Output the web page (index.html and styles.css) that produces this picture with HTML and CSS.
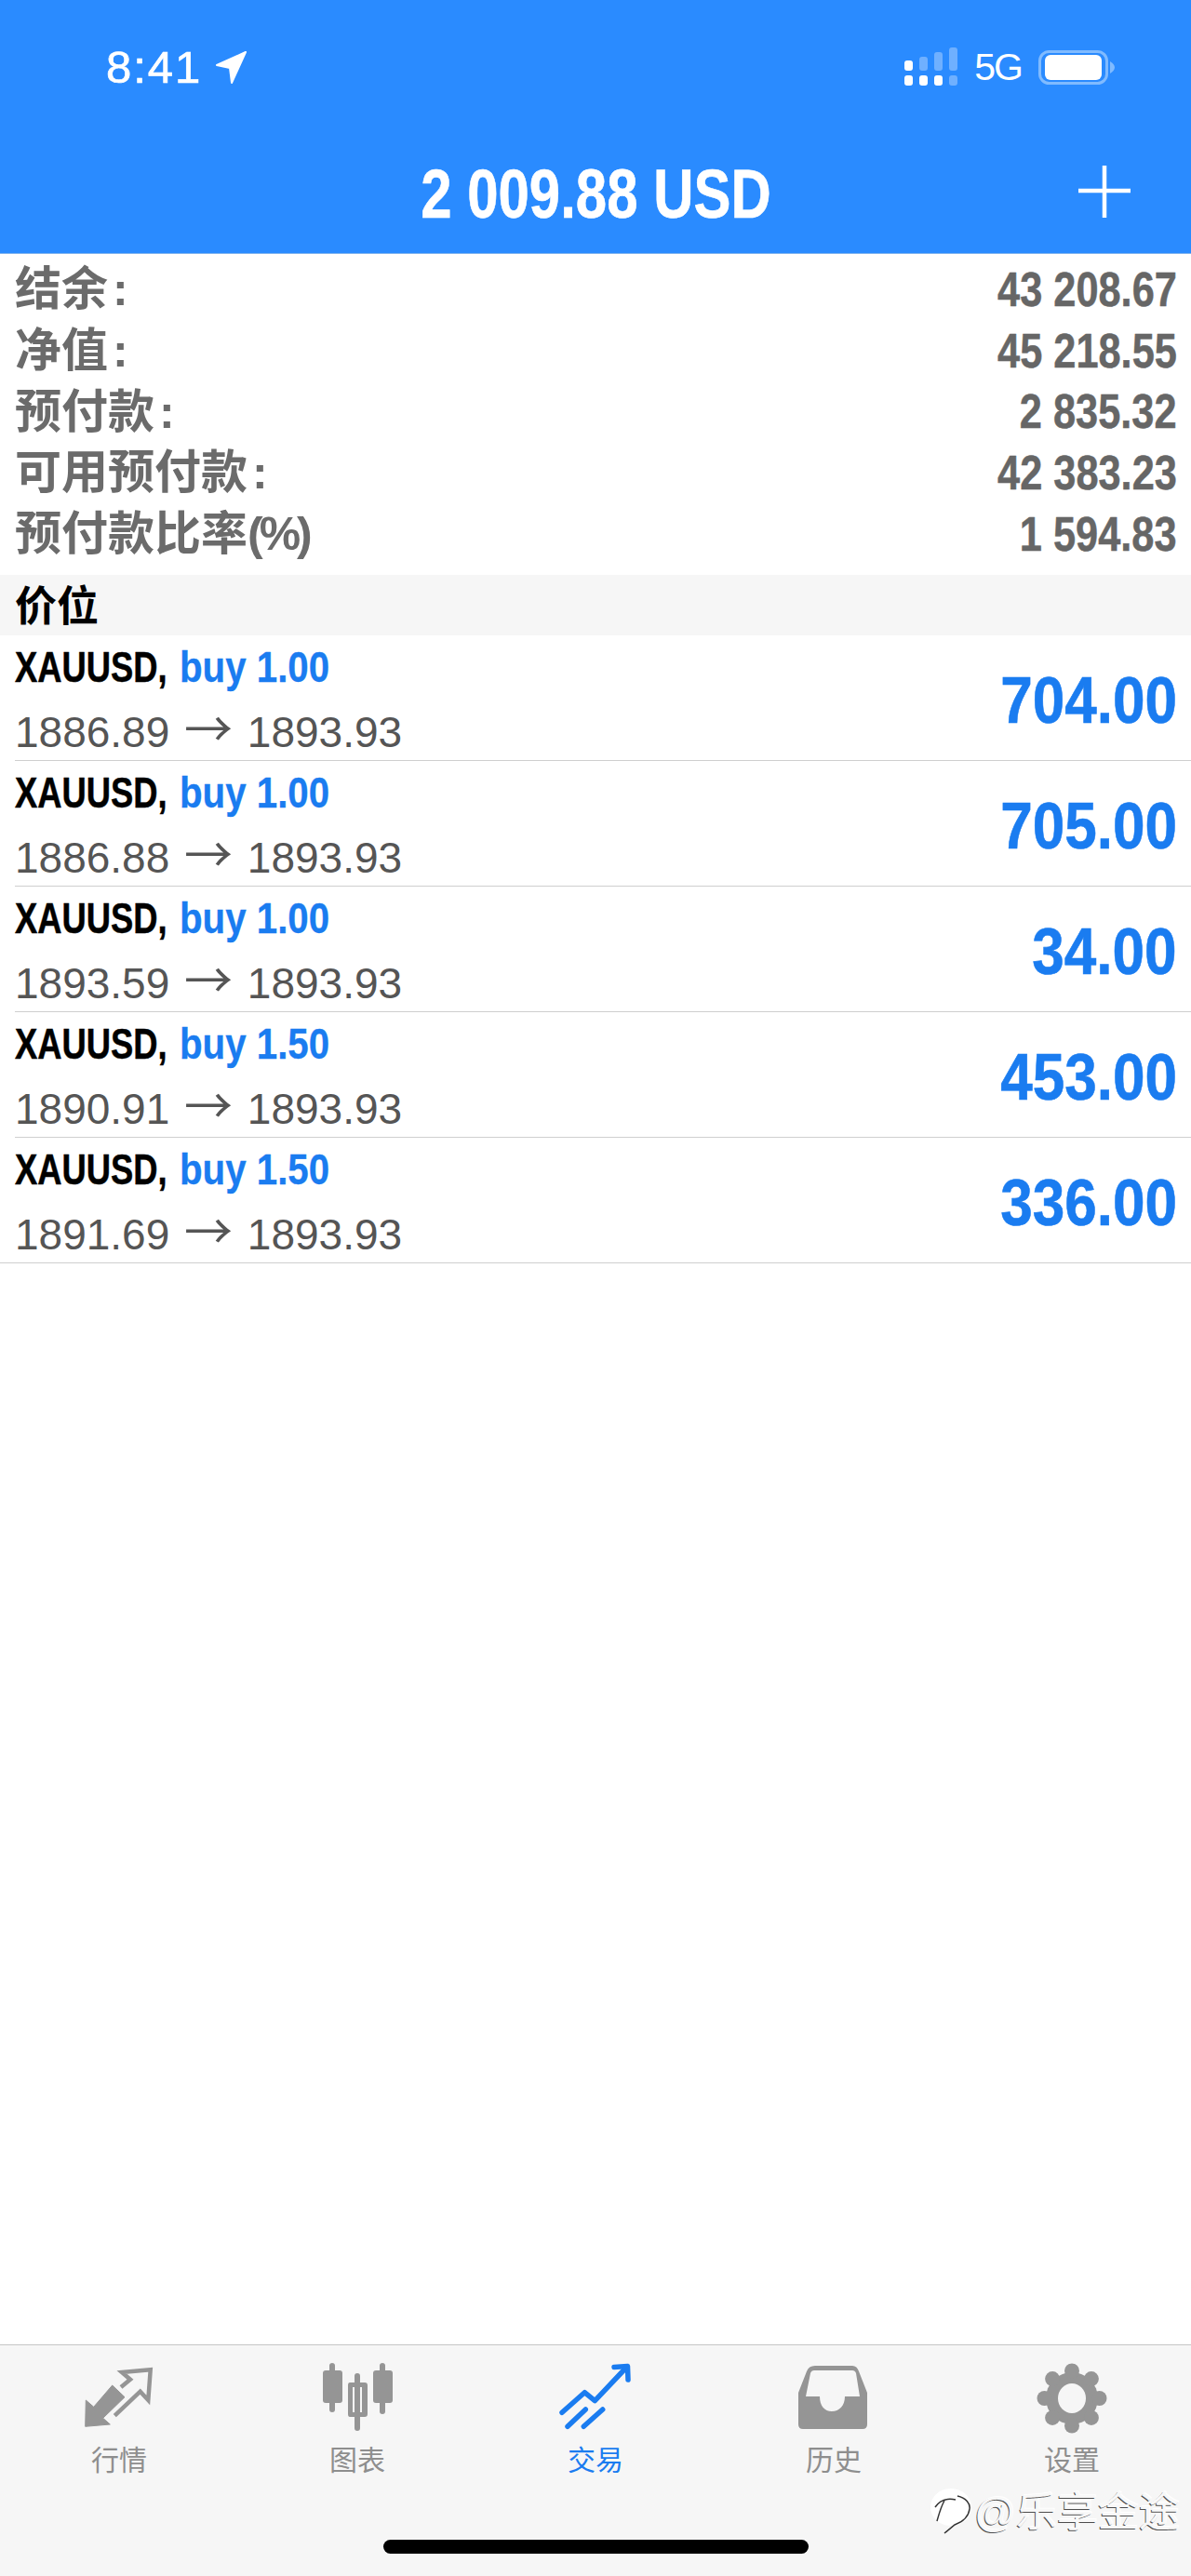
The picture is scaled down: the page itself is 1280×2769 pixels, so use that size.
FILE: index.html
```html
<!DOCTYPE html>
<html lang="zh-CN">
<head>
    <meta charset="UTF-8">
    <meta name="viewport" content="width=device-width, initial-scale=1.0">
    <title>交易</title>
    <link rel="stylesheet" href="styles.css">
</head>
<body>
    <div class="page">
        <div class="header">
            <div class="status">
                <div class="status-left">
                    <span class="time">8:41</span>
                    <svg class="location" width="34" height="35" viewBox="0 0 34 35"><path d="M32 1 L1 15 L15 18 L17 34 Z" fill="#fff" stroke="#fff" stroke-width="2" stroke-linejoin="round"/></svg>
                </div>
                <div class="status-right">
                    <svg width="62" height="45" viewBox="0 0 62 45">
                        <rect x="2" y="15" width="9" height="11" rx="3" fill="#fff"/>
                        <rect x="2" y="31" width="9" height="11" rx="3" fill="#fff"/>
                        <rect x="18" y="31" width="9" height="11" rx="3" fill="#fff"/>
                        <rect x="34" y="31" width="9" height="11" rx="3" fill="#fff"/>
                        <rect x="18" y="11" width="9" height="15" rx="3" fill="#6fb0ff"/>
                        <rect x="34" y="6" width="9" height="20" rx="3" fill="#6fb0ff"/>
                        <rect x="50" y="1" width="9" height="25" rx="3" fill="#6fb0ff"/>
                        <rect x="50" y="31" width="9" height="11" rx="3" fill="#6fb0ff"/>
                    </svg>
                    <span class="network">5G</span>
                    <svg width="82" height="37" viewBox="0 0 82 37">
                        <rect x="1.5" y="1.5" width="72" height="34" rx="10" fill="none" stroke="#80bbff" stroke-width="3"/>
                        <rect x="7" y="5" width="61" height="27" rx="6" fill="#fff"/>
                        <path d="M77 12 C80 14 82 16 82 18.500 C82 21 80 23 77 25 Z" fill="#80bbff"/>
                    </svg>
                </div>
            </div>
            <div class="title-bar">
                <span class="title"><span class="squeeze">2 009.88 USD</span></span>
                <svg class="plus" width="56" height="56" viewBox="0 0 56 56"><path d="M28 0 V56 M0 27 H56" stroke="#fff" stroke-width="4.500" fill="none"/></svg>
            </div>
        </div>

        <div class="content">
            <div class="summary">
                <div class="summary-row"><span class="summary-label">结余<i>:</i></span><span class="summary-value">43 208.67</span></div>
                <div class="summary-row"><span class="summary-label">净值<i>:</i></span><span class="summary-value">45 218.55</span></div>
                <div class="summary-row"><span class="summary-label">预付款<i>:</i></span><span class="summary-value">2 835.32</span></div>
                <div class="summary-row"><span class="summary-label">可用预付款<i>:</i></span><span class="summary-value">42 383.23</span></div>
                <div class="summary-row"><span class="summary-label">预付款比率<em>(%)</em></span><span class="summary-value">1 594.83</span></div>
            </div>

            <div class="section-title">价位</div>

            <div class="trade">
                <div class="trade-info">
                    <div class="trade-name"><b>XAUUSD,</b> <span>buy 1.00</span></div>
                    <div class="trade-price">1886.89 <span class="arrow">→</span> 1893.93</div>
                </div>
                <div class="trade-profit">704.00</div>
            </div>
            <div class="trade">
                <div class="trade-info">
                    <div class="trade-name"><b>XAUUSD,</b> <span>buy 1.00</span></div>
                    <div class="trade-price">1886.88 <span class="arrow">→</span> 1893.93</div>
                </div>
                <div class="trade-profit">705.00</div>
            </div>
            <div class="trade">
                <div class="trade-info">
                    <div class="trade-name"><b>XAUUSD,</b> <span>buy 1.00</span></div>
                    <div class="trade-price">1893.59 <span class="arrow">→</span> 1893.93</div>
                </div>
                <div class="trade-profit">34.00</div>
            </div>
            <div class="trade">
                <div class="trade-info">
                    <div class="trade-name"><b>XAUUSD,</b> <span>buy 1.50</span></div>
                    <div class="trade-price">1890.91 <span class="arrow">→</span> 1893.93</div>
                </div>
                <div class="trade-profit">453.00</div>
            </div>
            <div class="trade trade-last">
                <div class="trade-info">
                    <div class="trade-name"><b>XAUUSD,</b> <span>buy 1.50</span></div>
                    <div class="trade-price">1891.69 <span class="arrow">→</span> 1893.93</div>
                </div>
                <div class="trade-profit">336.00</div>
            </div>
        </div>

        <div class="tabbar">
            <div class="tabs">
                <div class="tab">
                    <svg width="80" height="80" viewBox="0 0 80 80">
                        <path d="M4.300 40 L12.700 47.300 L32.700 24 L46 36.700 L22.700 59.300 L30.300 66 L3.700 68.300 Z" fill="#959595" stroke="#959595" stroke-linejoin="round"/>
                        <path d="M42 26 L52 17.700 L43 10 L73.700 7.300 L71.300 40 L62.700 30.700 L35.300 56.700" fill="none" stroke="#959595" stroke-width="4.500"/>
                    </svg>
                    <span>行情</span>
                </div>
                <div class="tab">
                    <svg width="80" height="80" viewBox="0 0 80 80">
                        <rect x="10" y="0" width="6" height="53" rx="3" fill="#959595"/>
                        <rect x="3" y="8" width="21" height="35" rx="3" fill="#959595"/>
                        <rect x="37" y="11" width="6" height="62" rx="3" fill="#959595"/>
                        <path d="M32 21 H48 Q51 21 51 24 V55 Q51 58 48 58 H32 Q30 58 30 55 V24 Q30 21 32 21 Z M35 26 V53 H45 V26 Z" fill="#959595" fill-rule="evenodd"/>
                        <rect x="64" y="0" width="6" height="55" rx="3" fill="#959595"/>
                        <rect x="57" y="8" width="21" height="35" rx="3" fill="#959595"/>
                    </svg>
                    <span>图表</span>
                </div>
                <div class="tab tab-active">
                    <svg width="80" height="80" viewBox="0 0 80 80">
                        <g fill="none" stroke="#1a7cf0" stroke-width="5.500" stroke-linecap="round" stroke-linejoin="round">
                            <path d="M4 53.300 L28.300 31.700 L39.300 40.700 L73 5"/>
                            <path d="M60 4.500 L74.500 3.500 L75 18"/>
                            <path d="M10 68.300 L29.300 50"/>
                            <path d="M27.300 68.300 L47.700 50"/>
                        </g>
                    </svg>
                    <span>交易</span>
                </div>
                <div class="tab">
                    <svg width="80" height="80" viewBox="0 0 80 80">
                        <path d="M20 3 H60 Q65 3 67 9 L76 32 V66 Q76 71 71 71 H7 Q2 71 2 66 V32 L11 9 Q13 3 20 3 Z M19 8 Q16 8 15 11 L10 36 H25 C25 46 30 52 38 52 C46 52 52 46 52 36 H68 L64 11 Q63 8 60 8 Z" fill="#959595" fill-rule="evenodd"/>
                    </svg>
                    <span>历史</span>
                </div>
                <div class="tab">
                    <svg width="80" height="80" viewBox="0 0 80 80">
                        <g fill="#959595">
                            <circle cx="40" cy="38" r="28"/>
                            <circle cx="40" cy="8.500" r="8"/>
                            <circle cx="40" cy="67.500" r="8"/>
                            <circle cx="10.500" cy="38" r="8"/>
                            <circle cx="69.500" cy="38" r="8"/>
                            <circle cx="19.100" cy="17.100" r="8"/>
                            <circle cx="60.900" cy="17.100" r="8"/>
                            <circle cx="19.100" cy="58.900" r="8"/>
                            <circle cx="60.900" cy="58.900" r="8"/>
                        </g>
                        <ellipse cx="40" cy="38" rx="15" ry="16" fill="#f6f6f6"/>
                    </svg>
                    <span>设置</span>
                </div>
            </div>
            <div class="home-bar"></div>

            <!-- watermark sits over the tab bar -->
            <div class="watermark">
                <svg width="46" height="56" viewBox="0 0 46 56">
                    <ellipse cx="22" cy="22" rx="22" ry="20" fill="#fff"/>
                    <path d="M5 22 C10 15 18 12 27 14 M15 15 C11 22 9 30 7 37 M29 10 C38 12 43 18 42 24 C41 32 34 38 26 41 L15 50" fill="none" stroke="#333" stroke-width="1.500"/>
                </svg>
                <span>@乐享金途</span>
            </div>
        </div>
    </div>
</body>
</html>
```

FILE: styles.css
```css
* {
    box-sizing: border-box;
}
body {
    margin: 0;
    font-family: "Liberation Sans", "Noto Sans CJK SC", sans-serif;
    background-color: #fff;
}
.page {
    display: flex;
    flex-direction: column;
    height: 2769px;
}

/* blue top area */
.header {
    height: 273px;
    background-color: #2a8bff;
    border-bottom: 1px solid #7fb3ee;
    color: #fff;
}
.status {
    display: flex;
    justify-content: space-between;
    align-items: center;
    height: 144px;
    padding: 0 0 0 114px;
}
.status-left {
    display: flex;
    align-items: center;
    gap: 15px;
}
.time {
    font-size: 49px;
    letter-spacing: 2px;
    -webkit-text-stroke: 0.7px #fff;
}
.status-right {
    display: flex;
    align-items: center;
    gap: 15px;
    padding-right: 82px;
    margin-left: auto;
}
.network {
    font-size: 41px;
    letter-spacing: -2px;
    margin-right: 3px;
}
.title-bar {
    display: flex;
    justify-content: center;
    align-items: center;
    position: relative;
    height: 128px;
}
.title {
    font-size: 74px;
    font-weight: bold;
    -webkit-text-stroke: 0.6px #fff;
}
.squeeze {
    display: inline-block;
    transform: scaleX(0.81);
}
.plus {
    position: absolute;
    right: 65px;
    top: 34px;
}

/* account summary */
.content {
    flex: 1;
}
.summary {
    padding: 5px 15px 12px 16px;
}
.summary-row {
    display: flex;
    justify-content: space-between;
    align-items: center;
    height: 65.7px;
}
.summary-label {
    padding-bottom: 9px;
    font-size: 50px;
    font-weight: bold;
    color: #6b6b6b;
}
.summary-label i {
    font-style: normal;
    margin-left: 5px;
}
.summary-label em {
    font-style: normal;
    letter-spacing: -4px;
}
.summary-value {
    padding-top: 1px;
    font-size: 51px;
    font-weight: bold;
    color: #666;
    -webkit-text-stroke: 0.5px #666;
    transform: scaleX(0.85);
    transform-origin: right center;
}
.section-title {
    height: 65px;
    line-height: 69px;
    padding-left: 16px;
    background-color: #f6f6f6;
    font-size: 45px;
    font-weight: bold;
    color: #000;
}

/* open positions */
.trade {
    display: flex;
    justify-content: space-between;
    align-items: center;
    height: 135px;
    margin-left: 16px;
    padding-right: 15px;
    border-bottom: 1px solid #cfcfcf;
}
.trade-last {
    margin-left: 0;
    padding-left: 16px;
}
.trade-info {
    padding-bottom: 3px;
}
.trade-name {
    height: 63px;
    line-height: 63px;
    font-size: 46px;
    font-weight: bold;
    white-space: nowrap;
}
.trade-name b {
    display: inline-block;
    margin-right: -43px;
    color: #000;
    -webkit-text-stroke: 0.5px #000;
    transform: scaleX(0.79);
    transform-origin: left center;
}
.trade-name span {
    display: inline-block;
    color: #1a7cf0;
    -webkit-text-stroke: 0.3px #1a7cf0;
    transform: scaleX(0.875);
    transform-origin: left center;
}
.trade-price {
    height: 63px;
    line-height: 63px;
    font-size: 46px;
    color: #555;
    white-space: nowrap;
}
.arrow {
    margin: 0 3px;
    font-family: "Noto Sans CJK SC", sans-serif;
    font-size: 52px;
}
.trade-profit {
    padding-top: 4px;
    font-size: 71px;
    font-weight: bold;
    color: #1a7cf0;
    -webkit-text-stroke: 0.6px #1a7cf0;
    transform: scaleX(0.875);
    transform-origin: right center;
}

/* bottom tabs */
.tabbar {
    position: relative;
    height: 249px;
    background-color: #f6f6f6;
    border-top: 1px solid #c6c6c6;
}
.tabs {
    display: grid;
    grid-template-columns: repeat(5, 1fr);
    padding-top: 19px;
}
.tab {
    display: flex;
    flex-direction: column;
    align-items: center;
    gap: 10px;
    font-size: 30px;
    line-height: 30px;
    color: #8e8e8e;
}
.tab-active {
    color: #1a7cf0;
}
.home-bar {
    width: 457px;
    height: 15px;
    margin: 70px auto 0;
    border-radius: 8px;
    background-color: #000;
}
.watermark {
    position: absolute;
    left: 1000px;
    top: 152px;
    display: flex;
    align-items: center;
    gap: 1px;
    font-size: 44px;
    line-height: 56px;
    color: #f8f8f8;
    text-shadow: -1px 1px 0 rgba(30, 30, 30, 0.8), 1px -1px 0 #fff;
    white-space: nowrap;
}
```
